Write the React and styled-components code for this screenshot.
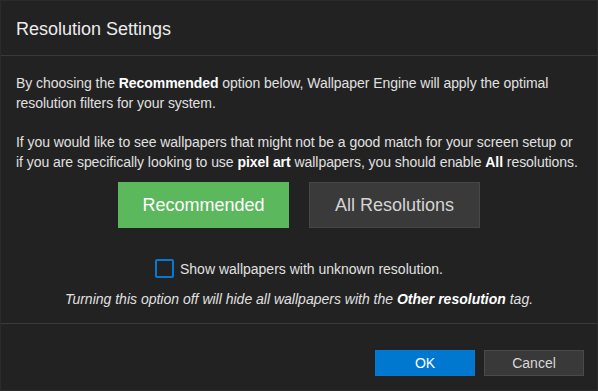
import React, { useState } from 'react';
import styled, { createGlobalStyle } from 'styled-components';

const Global = createGlobalStyle`
  html, body {
    margin: 0;
    padding: 0;
    background: #222222;
  }
  body {
    font-family: "Liberation Sans", Arial, sans-serif;
  }
`;

const Dialog = styled.div`
  box-sizing: border-box;
  width: 598px;
  height: 391px;
  display: flex;
  flex-direction: column;
  background: #222222;
  border: 1px solid #2b2b2b;
  color: #dedede;
`;

const Header = styled.header`
  height: 55px;
  display: flex;
  align-items: center;
  padding: 2px 15px 0;
  box-sizing: border-box;
  border-bottom: 1px solid #3a3a3a;
`;

const Title = styled.h1`
  margin: 0;
  font-size: 18px;
  font-weight: normal;
  color: #ececec;
`;

const Body = styled.section`
  flex: 1;
  padding: 18px 2px 0 15px;
  border-bottom: 1px solid #3a3a3a;
`;

const Text = styled.p`
  margin: 0 0 ${p => (p.$last ? '10px' : '20px')};
  font-size: 14px;
  line-height: 19.5px;
  color: #e0e0e0;
  white-space: nowrap;
  letter-spacing: -0.05px;

  b { color: #ffffff; }
`;

const Choices = styled.div`
  display: flex;
  justify-content: center;
  gap: 20px;
  padding-right: 13px;
`;

const Choice = styled.button`
  width: 171px;
  height: 46px;
  box-sizing: border-box;
  font-family: inherit;
  font-size: 18px;
  cursor: pointer;
  border: 1px solid ${p => (p.$active ? '#5cb85c' : '#474747')};
  background: ${p => (p.$active ? '#5cb85c' : '#3a3a3a')};
  color: ${p => (p.$active ? '#ffffff' : '#d4d4d4')};
`;

const CheckRow = styled.label`
  margin-top: 31px;
  padding-right: 13px;
  display: flex;
  align-items: center;
  justify-content: center;
  gap: 5px;
  font-size: 14px;
  color: #e0e0e0;
  cursor: pointer;
`;

const Box = styled.span`
  box-sizing: border-box;
  width: 19px;
  height: 19px;
  border: 2px solid #0b78d0;
  border-radius: 2px;
  background: ${p => (p.$on ? '#0b78d0' : 'transparent')};
  margin-right: 1px;
`;

const Note = styled.p`
  margin: 13px 0 0;
  padding-right: 13px;
  text-align: center;
  font-size: 14px;
  font-style: italic;
  color: #e0e0e0;

  b { color: #ffffff; }
`;

const Footer = styled.footer`
  height: 66px;
  display: flex;
  justify-content: flex-end;
  align-items: flex-end;
  gap: 9px;
  padding: 0 13px 14px;
  box-sizing: border-box;
`;

const Action = styled.button`
  width: 100px;
  height: 26px;
  box-sizing: border-box;
  font-family: inherit;
  font-size: 14px;
  cursor: pointer;
  border: 1px solid ${p => (p.$primary ? '#0a78d0' : '#4a4a4a')};
  background: ${p => (p.$primary ? '#0078d0' : '#393939')};
  color: ${p => (p.$primary ? '#ffffff' : '#d8d8d8')};
`;

export default function App() {
  const [mode, setMode] = useState('recommended');
  const [unknown, setUnknown] = useState(false);

  return (
    <>
      <Global />
      <Dialog>
        <Header>
          <Title>Resolution Settings</Title>
        </Header>
        <Body>
          <Text>
            By choosing the <b>Recommended</b> option below, Wallpaper Engine will apply the optimal
            <br />
            resolution filters for your system.
          </Text>
          <Text $last>
            If you would like to see wallpapers that might not be a good match for your screen setup or
            <br />
            if you are specifically looking to use <b>pixel art</b> wallpapers, you should enable <b>All</b> resolutions.
          </Text>
          <Choices>
            <Choice $active={mode === 'recommended'} onClick={() => setMode('recommended')}>
              Recommended
            </Choice>
            <Choice $active={mode === 'all'} onClick={() => setMode('all')}>
              All Resolutions
            </Choice>
          </Choices>
          <CheckRow onClick={() => setUnknown(!unknown)}>
            <Box $on={unknown} />
            Show wallpapers with unknown resolution.
          </CheckRow>
          <Note>
            Turning this option off will hide all wallpapers with the <b>Other resolution</b> tag.
          </Note>
        </Body>
        <Footer>
          <Action $primary>OK</Action>
          <Action>Cancel</Action>
        </Footer>
      </Dialog>
    </>
  );
}
